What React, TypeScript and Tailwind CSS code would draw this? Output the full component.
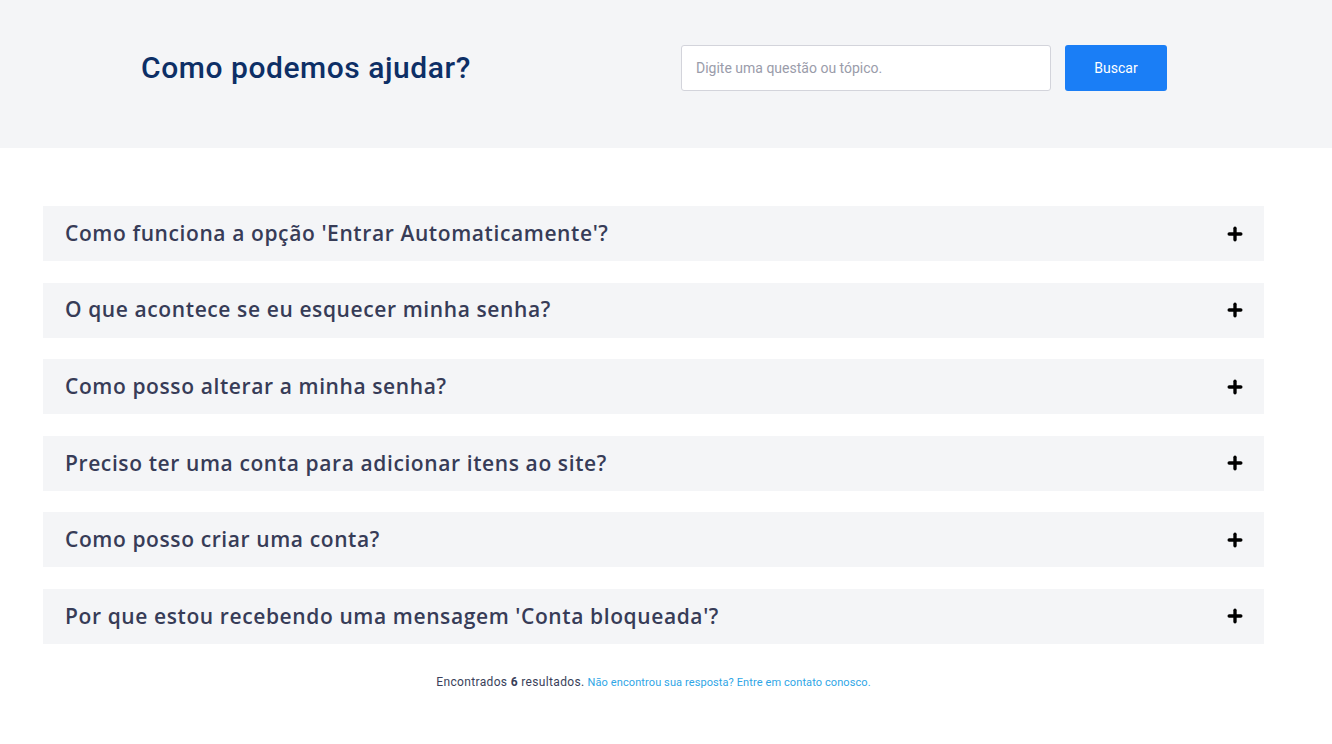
import { Plus } from 'lucide-react';

const questions = [
  "Como funciona a opção 'Entrar Automaticamente'?",
  'O que acontece se eu esquecer minha senha?',
  'Como posso alterar a minha senha?',
  'Preciso ter uma conta para adicionar itens ao site?',
  'Como posso criar uma conta?',
  "Por que estou recebendo uma mensagem 'Conta bloqueada'?",
];

export default function App() {
  return (
    <div className="min-h-screen bg-white font-['Roboto',sans-serif]">
      <header className="h-[148px] bg-[#f4f5f7] flex items-center pl-[141px]">
        <h1 className="w-[540px] text-[30px] font-medium text-[#0d2f66] tracking-[0.55px] -mt-[13px]">
          Como podemos ajudar?
        </h1>
        <div className="flex gap-[14px] -mt-[12px]">
          <input
            className="w-[370px] h-[46px] bg-white border border-[#d3d4db] rounded-[3px] px-[14px] text-[14px] text-[#333] placeholder:text-[#9a9caa] outline-none"
            placeholder="Digite uma questão ou tópico."
          />
          <button className="w-[102px] h-[46px] bg-[#1a7ef6] rounded-[3px] text-white text-[14px]">
            Buscar
          </button>
        </div>
      </header>

      <main className="pt-[58px] pl-[43px]">
        <div className="w-[1221px] flex flex-col gap-[21.6px]">
          {questions.map((q) => (
            <div
              key={q}
              className="h-[55px] bg-[#f4f5f7] flex items-center justify-between pl-[22px] pr-[19px]"
            >
              <span className="font-['Open_Sans',sans-serif] text-[21px] font-semibold text-[#373c57] tracking-[0.6px]">
                {q}
              </span>
              <Plus size={20} strokeWidth={4} className="text-black" />
            </div>
          ))}
        </div>
        <p className="w-[1221px] text-center mt-[29px] text-[12px] text-[#3a3f5a]">
          <span className="tracking-[0.35px]">
            Encontrados <b className="font-bold">6</b> resultados.
          </span>{' '}
          <a className="text-[11px] text-[#2fa6e6] tracking-[0.1px]">
            Não encontrou sua resposta? Entre em contato conosco.
          </a>
        </p>
      </main>
    </div>
  );
}
